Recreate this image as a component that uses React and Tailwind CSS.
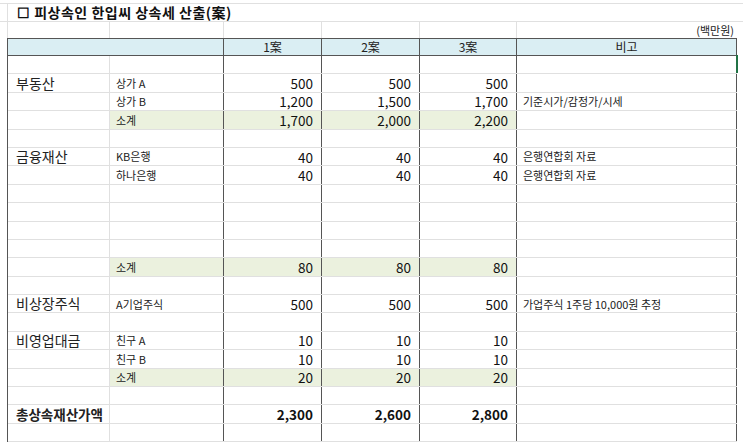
const F = { fontFamily: '"Malgun Gothic","Noto Sans CJK KR",sans-serif' };
const W = ['w-[102px]', 'w-[114px]', 'w-[98px]', 'w-[98px]', 'w-[97px]', 'w-[220px]'];

function Row({ h = 'h-[18.4px]', a = '', b = '', n = [], note = '', sub = false, bold = false }) {
  const fill = sub ? 'bg-[#ebf1de]' : '';
  const nb = 'border-r border-[#555]';
  return (
    <div className={`flex ${h} border-b border-[#e0e0e0]`}>
      <div className={`${W[0]} shrink-0 border-r border-[#e0e0e0] flex items-center pl-[8px] ${bold ? 'text-[13.5px] font-bold' : 'text-[14px]'} text-[#222] whitespace-nowrap`}>{a}</div>
      <div className={`${W[1]} shrink-0 ${nb} ${fill} flex items-center pl-[6px] text-[11px] text-[#222]`}>{b}</div>
      {[0, 1, 2].map(i => (
        <div key={i} className={`${W[2 + i]} shrink-0 ${nb} ${fill} flex items-center justify-end pr-[8px] text-[13.5px] ${bold ? 'font-bold' : ''} text-[#111]`}>{n[i] ?? ''}</div>
      ))}
      <div className={`${W[5]} shrink-0 border-r border-[#555] flex items-center pl-[6px] text-[11px] text-[#222]`}>{note}</div>
    </div>
  );
}

export default function App() {
  return (
    <div style={F} className="w-[743px] h-[444px] bg-white overflow-hidden relative">
      <div className="h-[4px] border-b border-[#e0e0e0]"></div>
      <div className="flex h-[18px] border-b border-[#e0e0e0]">
        <div className="w-[8px] border-r border-[#e0e0e0]"></div>
        <div className="flex items-center pl-[9px] text-[14px] tracking-[0.5px] font-bold text-[#111] whitespace-nowrap">☐ 피상속인 한입씨 상속세 산출(案)</div>
      </div>
      <div className="flex h-[16px]">
        <div className="w-[8px] border-r border-[#e0e0e0]"></div>
        <div className={`${W[0]} border-r border-[#e0e0e0]`}></div>
        <div className={`${W[1]} border-r border-[#e0e0e0]`}></div>
        <div className={`${W[2]} border-r border-[#e0e0e0]`}></div>
        <div className={`${W[3]} border-r border-[#e0e0e0]`}></div>
        <div className={`${W[4]} border-r border-[#e0e0e0]`}></div>
        <div className={`${W[5]} flex items-center justify-end pr-[3px] text-[11px] text-[#222]`}>(백만원)</div>
      </div>
      <div className="flex">
        <div className="w-[8px] shrink-0 border-r border-[#555]"></div>
        <div>
          <div className="flex h-[18px] bg-[#daeef3] border-y border-[#555] text-[12px] text-[#222]">
            <div className="w-[216px] shrink-0 border-r border-[#555]"></div>
            <div className={`${W[2]} shrink-0 border-r border-[#555] flex items-center justify-center`}>1案</div>
            <div className={`${W[3]} shrink-0 border-r border-[#555] flex items-center justify-center`}>2案</div>
            <div className={`${W[4]} shrink-0 border-r border-[#555] flex items-center justify-center`}>3案</div>
            <div className={`${W[5]} shrink-0 border-r border-[#555] flex items-center justify-center`}>비고</div>
          </div>
          <Row />
          <Row a="부동산" b="상가 A" n={['500', '500', '500']} />
          <Row b="상가 B" n={['1,200', '1,500', '1,700']} note="기준시가/감정가/시세" />
          <Row b="소계" n={['1,700', '2,000', '2,200']} sub />
          <Row />
          <Row a="금융재산" b="KB은행" n={['40', '40', '40']} note="은행연합회 자료" />
          <Row b="하나은행" n={['40', '40', '40']} note="은행연합회 자료" />
          <Row />
          <Row />
          <Row />
          <Row />
          <Row b="소계" n={['80', '80', '80']} sub />
          <Row />
          <Row a="비상장주식" b="A기업주식" n={['500', '500', '500']} note="가업주식 1주당 10,000원 추정" />
          <Row />
          <Row a="비영업대금" b="친구 A" n={['10', '10', '10']} />
          <Row b="친구 B" n={['10', '10', '10']} />
          <Row b="소계" n={['20', '20', '20']} sub />
          <Row />
          <Row a="총상속재산가액" n={['2,300', '2,600', '2,800']} bold />
          <Row />
        </div>
      </div>
      <div className="absolute left-[736px] top-[55px] w-[2px] h-[18px] bg-[#217346]"></div>
    </div>
  );
}
